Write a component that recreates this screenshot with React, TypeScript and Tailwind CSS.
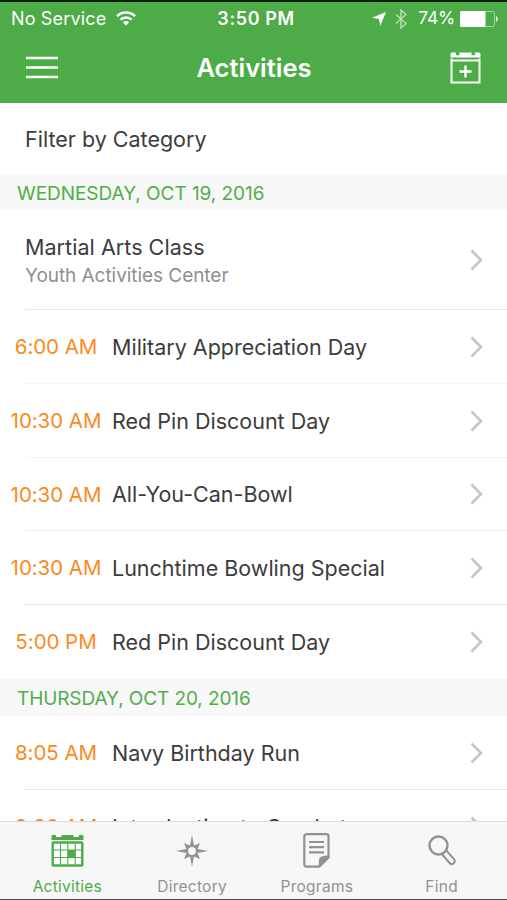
import type { ReactNode } from 'react'

type Activity = {
  time: string
  title: string
  line: string
}

const wednesday: Activity[] = [
  { time: '6:00 AM', title: 'Military Appreciation Day', line: 'bg-[#f6f6f6]' },
  { time: '10:30 AM', title: 'Red Pin Discount Day', line: 'bg-[#f4f4f4]' },
  { time: '10:30 AM', title: 'All-You-Can-Bowl', line: 'bg-[#ededed]' },
  { time: '10:30 AM', title: 'Lunchtime Bowling Special', line: 'bg-[#e9e9e9]' },
  { time: '5:00 PM', title: 'Red Pin Discount Day', line: 'bg-transparent' },
]

const thursday: Activity[] = [
  { time: '8:05 AM', title: 'Navy Birthday Run', line: 'bg-[#e6e6e6]' },
  { time: '9:30 AM', title: 'Introduction to Crochet', line: 'bg-transparent' },
]

export default function App() {
  return (
    <div className="flex h-[900px] w-[507px] flex-col overflow-hidden bg-white font-['Inter','Liberation_Sans',sans-serif] text-[#3c3c3c]">
      <header className="h-[103px] shrink-0 border-t-2 border-[#0b1f09] bg-[#4dac47] text-white">
        <StatusBar />
        <div className="flex h-[65px] items-center justify-between px-[26px]">
          <svg width="32" height="23" viewBox="0 0 32 23" stroke="currentColor" strokeWidth="2.4">
            <path d="M0 2h32M0 11.5h32M0 21h32" />
          </svg>
          <h1 className="pt-[2px] text-[25.5px] font-semibold">Activities</h1>
          <AddCalendarIcon />
        </div>
      </header>

      <main className="min-h-0 flex-1 overflow-hidden">
        <div className="flex h-[71px] items-center pl-[25px] pt-[2px] text-[21.5px]">Filter by Category</div>
        <DayHeader className="h-9 pt-1 tracking-[-0.05px]">WEDNESDAY, OCT 19, 2016</DayHeader>
        <div className="flex h-[99px] items-center justify-between pl-[25px] pr-[24px]">
          <div className="pt-[5px]">
            <div className="text-[21.5px] leading-[27px] tracking-[0.05px]">Martial Arts Class</div>
            <div className="text-[19px] leading-[29px] tracking-[-0.05px] text-[#8f8f8f]">Youth Activities Center</div>
          </div>
          <Chevron />
        </div>
        <div className="ml-[25px] h-px bg-[#e9e9e9]" />
        {wednesday.map((a, i) => (
          <ActivityRow key={i} activity={a} />
        ))}
        <DayHeader className="h-[37px] pt-[3px] tracking-[-0.1px]">THURSDAY, OCT 20, 2016</DayHeader>
        {thursday.map((a, i) => (
          <ActivityRow key={i} activity={a} />
        ))}
      </main>

      <TabBar />
    </div>
  )
}

function StatusBar() {
  return (
    <div className="flex h-[33px] items-center pl-[11px] pr-[9px] text-[18px]">
      <div className="flex flex-1 items-center gap-2.5">
        <span className="tracking-[0.15px]">No Service</span>
        <svg width="20" height="15" viewBox="0 0 20 15" fill="none" stroke="currentColor" strokeWidth="2.5">
          <path d="M1 5.2a12.8 12.8 0 0 1 18 0M4.4 8.7a8 8 0 0 1 11.2 0" />
          <path d="M10 14.5 6.8 11.2a4.6 4.6 0 0 1 6.4 0z" fill="currentColor" stroke="none" />
        </svg>
      </div>
      <span className="pl-[3px] font-semibold tracking-[0.6px]">3:50 PM</span>
      <div className="flex flex-1 items-center justify-end">
        <svg width="14" height="14" viewBox="0 0 14 14" fill="currentColor">
          <path d="M14 0 8.2 14 7 7 0 5.8z" />
        </svg>
        <svg className="ml-[9px] opacity-60" width="12" height="20" viewBox="0 0 12 20" fill="none" stroke="currentColor" strokeWidth="1.5">
          <path d="m1 5.5 10 9-5 4.5V1l5 4.5-10 9" />
        </svg>
        <span className="ml-[11px] text-[17.5px] tracking-[-0.2px]">74%</span>
        <svg className="ml-[5px]" width="38" height="16" viewBox="0 0 38 16">
          <rect x="0.5" y="0.5" width="34" height="15" rx="2" fill="none" stroke="white" strokeOpacity="0.5" />
          <rect width="25.5" height="16" rx="1.5" fill="white" />
          <path d="M36 5a3.4 3.4 0 0 1 0 6z" fill="white" />
        </svg>
      </div>
    </div>
  )
}

function DayHeader({ className, children }: { className: string; children: ReactNode }) {
  return (
    <div className={`${className} flex items-center bg-[#f8f8f8] pl-[17px] text-[19px] text-[#50ae4b]`}>
      {children}
    </div>
  )
}

function ActivityRow({ activity }: { activity: Activity }) {
  return (
    <div className="flex h-[73.8px] flex-col">
      <div className="flex flex-1 items-center pr-[24px] pt-[1px]">
        <div className="w-28 pt-[1px] text-center text-[20.5px] tracking-[-0.05px] text-[#fa8a1e]">{activity.time}</div>
        <div className="flex-1 text-[21.5px]">{activity.title}</div>
        <Chevron />
      </div>
      <div className={`${activity.line} ml-[25px] h-px`} />
    </div>
  )
}

function Chevron() {
  return (
    <svg width="13" height="22" viewBox="0 0 13 22" fill="none" stroke="#c5c5c8" strokeWidth="2.6">
      <path d="m1.5 1.5 9.5 9.5-9.5 9.5" />
    </svg>
  )
}

function AddCalendarIcon() {
  return (
    <svg width="31" height="32" viewBox="0 0 31 32" fill="none" stroke="currentColor">
      <path d="M0.5 2q0-1.500 1.500-1.500h4v2.800h3.500V0.500h12v2.800H25V0.500h4q1.500 0 1.500 1.500v3.500H0.500z" fill="currentColor" stroke="none" />
      <path d="M1.500 6.500v24h28v-24" strokeWidth="2" />
      <path d="M1 8.500h29" strokeWidth="2" />
      <path d="M15.500 13.500v12M9.500 19.500h12" strokeWidth="2.400" />
    </svg>
  )
}

function TabBar() {
  return (
    <nav className="flex h-[79px] shrink-0 border-b border-t border-b-[#4b4b4b] border-t-[#dcdcdc] bg-[#f7f7f7] pl-[5px] pr-[3px]">
      <Tab label="Activities" active>
        <svg width="33" height="32" viewBox="0 0 33 32" fill="none" stroke="currentColor">
          <path d="M0.500 1q0-1 1-1H5v2h5.500V0h12v2H28V0h3.500q1 0 1 1V5H0.500z" fill="currentColor" stroke="none" />
          <rect x="1.700" y="7.500" width="29.600" height="23" rx="0.500" strokeWidth="2.400" fill="white" />
          <path d="M9.500 7v23M16.800 7v23M24.200 7v23M1 15h31M1 22.500h31" strokeWidth="1.100" />
          <rect x="16.800" y="15" width="7.500" height="7.500" fill="currentColor" stroke="none" />
        </svg>
      </Tab>
      <Tab label="Directory">
        <svg width="34" height="34" viewBox="0 0 34 34" fill="currentColor">
          <path d="m17 1 2 10.500h-4zM17 33l-2-10.500h4zM1 17l10.500-2v4zM33 17l-10.500 2v-4z" />
          <path d="m9 9 7 3-4 4zM25 9l-3 7-4-4zM9 25l3-7 4 4zM25 25l-7-3 4-4z" />
          <circle cx="17" cy="17" r="5" fill="#f7f7f7" stroke="currentColor" strokeWidth="2.200" />
        </svg>
      </Tab>
      <Tab label="Programs">
        <svg width="27" height="35" viewBox="0 0 27 35" fill="none" stroke="currentColor" strokeWidth="2.200">
          <path d="M3.500 1.200h20a2 2 0 0 1 2 2V24l-9.500 9.700H3.500a2.200 2.200 0 0 1-2.200-2.200v-28a2.200 2.200 0 0 1 2.200-2.300z" />
          <path d="M15 34c1.500-2 .5-5 1-7.500.5-2.800 4-4 10.500-4V25L17.500 34z" fill="currentColor" stroke="none" />
          <path d="M6 9h15M6 14.200h15M6 19.400h15" />
        </svg>
      </Tab>
      <Tab label="Find">
        <svg width="28" height="31" viewBox="0 0 28 31" fill="none" stroke="currentColor" strokeWidth="2">
          <circle cx="10.500" cy="10.500" r="9" strokeWidth="2.400" />
          <path d="m13.800 19 7.800 9a2.900 2.900 0 0 0 4.400-3.900l-7.800-8.800" />
        </svg>
      </Tab>
    </nav>
  )
}

function Tab({ label, active, children }: { label: string; active?: boolean; children: ReactNode }) {
  return (
    <div className={`${active ? 'text-[#4dac47]' : 'text-[#929292]'} flex flex-1 flex-col items-center pt-[10px]`}>
      <div className="flex h-[37px] items-center justify-center">{children}</div>
      <span className="mt-[8px] text-[15.5px] leading-[20px] tracking-[0.25px]">{label}</span>
    </div>
  )
}
